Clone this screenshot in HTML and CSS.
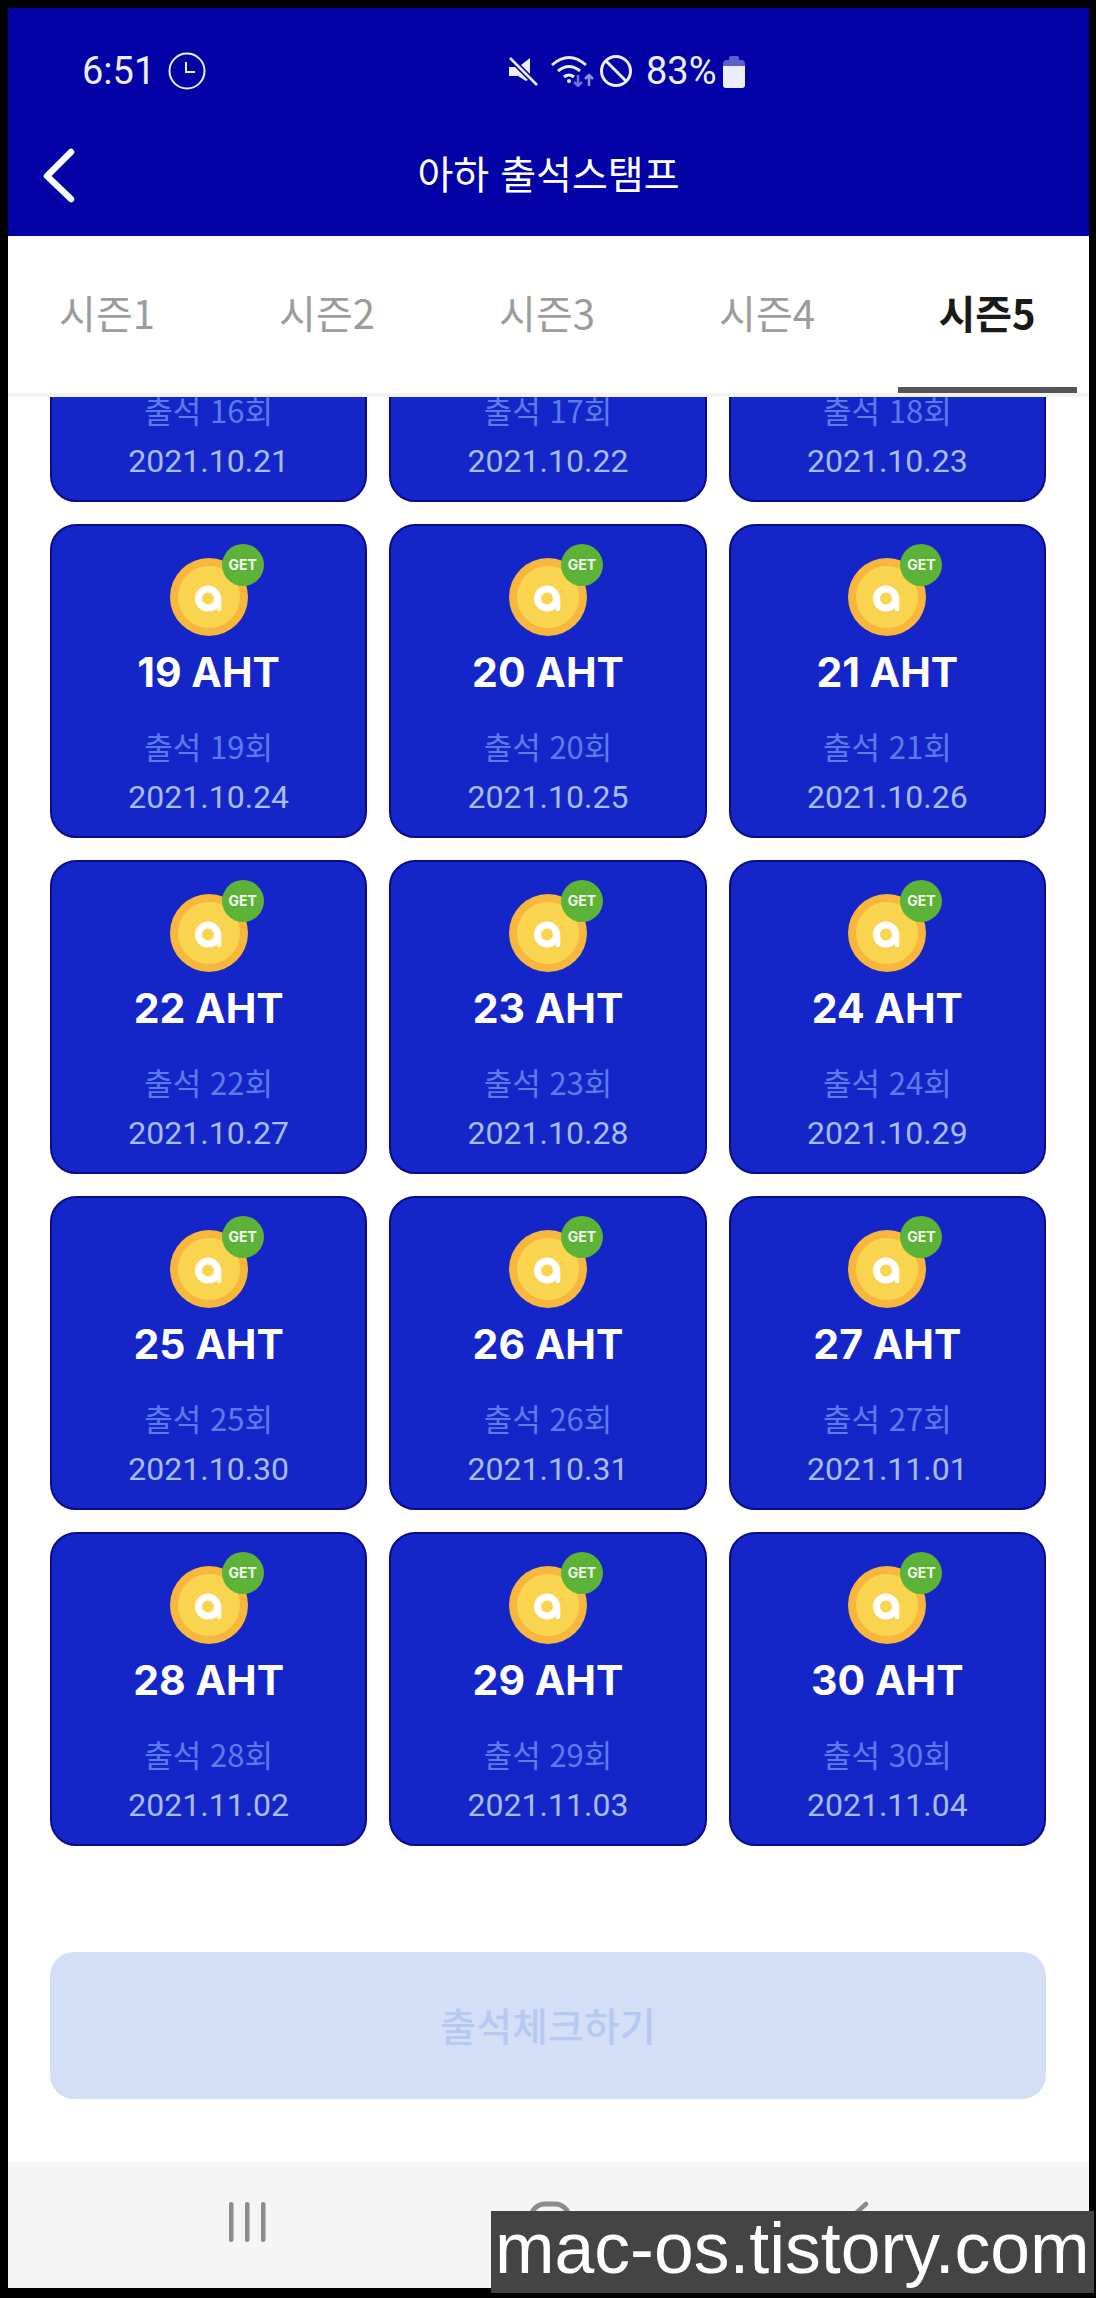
FILE: index.html
```html
<!DOCTYPE html>
<html lang="ko">
<head>
    <meta charset="UTF-8">
    <meta name="viewport" content="width=device-width, initial-scale=1.0">
    <title>아하 출석스탬프</title>
    <link rel="stylesheet" href="styles.css">
</head>
<body>
    <svg class="sprite" width="0" height="0">
        <symbol id="coin" viewBox="0 0 78 78">
            <circle cx="39" cy="39" r="39" fill="#f6b73c"/>
            <circle cx="39" cy="39" r="31" fill="#f8d44f"/>
            <circle cx="38" cy="40.500" r="9.500" fill="none" stroke="#fff" stroke-width="7"/>
            <path d="M49 40v11" fill="none" stroke="#fff" stroke-width="4.500" stroke-linecap="round"/>
        </symbol>
    </svg>

    <div class="phone">
        <header class="app__header">
            <div class="status__bar">
                <div class="status__left">
                    <span>6:51</span>
                    <svg class="status__clock" width="38" height="38" viewBox="0 0 38 38" fill="none" stroke="#eeeefb" stroke-width="2">
                        <circle cx="19" cy="19" r="17.500"/>
                        <path d="M18 10v10h9"/>
                    </svg>
                </div>
                <div class="status__right">
                    <svg width="32" height="32" viewBox="0 0 32 32" fill="#eeeefb">
                        <path d="M1 12h6l13 13-2 1-8-5H1z"/>
                        <path d="M13 10l9-7v16z"/>
                        <path d="M2 3l27 27" fill="none" stroke="#eeeefb" stroke-width="2.500"/>
                    </svg>
                    <svg class="status__wifi" width="44" height="32" viewBox="0 0 44 32" fill="none" stroke="#eeeefb" stroke-width="3">
                        <path d="M1 10q17-15 34 0"/>
                        <path d="M7 16q11-9 22 0"/>
                        <path d="M13 22q5-4 10 0"/>
                        <circle cx="18" cy="26" r="2" fill="#eeeefb" stroke="none"/>
                        <path d="M27 20v11m-4-4l4 4 4-4" stroke="#6f74d8" stroke-width="2.500"/>
                        <path d="M38 31V20m-4 4l4-4 4 4" stroke="#8d91e2" stroke-width="2.500"/>
                    </svg>
                    <svg class="status__ban" width="34" height="34" viewBox="0 0 34 34" fill="none" stroke="#eeeefb" stroke-width="3">
                        <circle cx="17" cy="17" r="14.500"/>
                        <path d="M7 7l20 20"/>
                    </svg>
                    <span class="status__battery-text">83%</span>
                    <svg width="22" height="33" viewBox="0 0 22 33">
                        <path d="M6 5V3q0-2 2-2h6q2 0 2 2v2h2q4 0 4 4v4H0V9q0-4 4-4z" fill="#5a5fcc"/>
                        <path d="M0 11h22v19q0 3-3 3H3q-3 0-3-3z" fill="#eeeefb"/>
                    </svg>
                </div>
            </div>
            <div class="app__toolbar">
                <svg class="app__back" width="40" height="58" viewBox="0 0 40 58" fill="none" stroke="#fff" stroke-width="6.500" stroke-linecap="round" stroke-linejoin="round">
                    <path d="M35 6L11 30l24 23"/>
                </svg>
                <h1 class="app__title">아하 출석스탬프</h1>
            </div>
        </header>

        <nav class="season__tabs">
            <div class="season__tab"><span class="season__label">시즌1</span></div>
            <div class="season__tab"><span class="season__label">시즌2</span></div>
            <div class="season__tab"><span class="season__label">시즌3</span></div>
            <div class="season__tab"><span class="season__label">시즌4</span></div>
            <div class="season__tab season__tab--active"><span class="season__label">시즌5</span></div>
        </nav>

        <main class="stamp__list">
            <div class="stamp__grid">
                <div class="stamp__card">
                    <div class="stamp__coin"><svg width="78" height="78"><use href="#coin"/></svg><span class="stamp__badge">GET</span></div>
                    <div class="stamp__amount">16 AHT</div>
                    <div class="stamp__count">출석 16회</div>
                    <div class="stamp__date">2021.10.21</div>
                </div>
                <div class="stamp__card">
                    <div class="stamp__coin"><svg width="78" height="78"><use href="#coin"/></svg><span class="stamp__badge">GET</span></div>
                    <div class="stamp__amount">17 AHT</div>
                    <div class="stamp__count">출석 17회</div>
                    <div class="stamp__date">2021.10.22</div>
                </div>
                <div class="stamp__card">
                    <div class="stamp__coin"><svg width="78" height="78"><use href="#coin"/></svg><span class="stamp__badge">GET</span></div>
                    <div class="stamp__amount">18 AHT</div>
                    <div class="stamp__count">출석 18회</div>
                    <div class="stamp__date">2021.10.23</div>
                </div>
                <div class="stamp__card">
                    <div class="stamp__coin"><svg width="78" height="78"><use href="#coin"/></svg><span class="stamp__badge">GET</span></div>
                    <div class="stamp__amount">19 AHT</div>
                    <div class="stamp__count">출석 19회</div>
                    <div class="stamp__date">2021.10.24</div>
                </div>
                <div class="stamp__card">
                    <div class="stamp__coin"><svg width="78" height="78"><use href="#coin"/></svg><span class="stamp__badge">GET</span></div>
                    <div class="stamp__amount">20 AHT</div>
                    <div class="stamp__count">출석 20회</div>
                    <div class="stamp__date">2021.10.25</div>
                </div>
                <div class="stamp__card">
                    <div class="stamp__coin"><svg width="78" height="78"><use href="#coin"/></svg><span class="stamp__badge">GET</span></div>
                    <div class="stamp__amount">21 AHT</div>
                    <div class="stamp__count">출석 21회</div>
                    <div class="stamp__date">2021.10.26</div>
                </div>
                <div class="stamp__card">
                    <div class="stamp__coin"><svg width="78" height="78"><use href="#coin"/></svg><span class="stamp__badge">GET</span></div>
                    <div class="stamp__amount">22 AHT</div>
                    <div class="stamp__count">출석 22회</div>
                    <div class="stamp__date">2021.10.27</div>
                </div>
                <div class="stamp__card">
                    <div class="stamp__coin"><svg width="78" height="78"><use href="#coin"/></svg><span class="stamp__badge">GET</span></div>
                    <div class="stamp__amount">23 AHT</div>
                    <div class="stamp__count">출석 23회</div>
                    <div class="stamp__date">2021.10.28</div>
                </div>
                <div class="stamp__card">
                    <div class="stamp__coin"><svg width="78" height="78"><use href="#coin"/></svg><span class="stamp__badge">GET</span></div>
                    <div class="stamp__amount">24 AHT</div>
                    <div class="stamp__count">출석 24회</div>
                    <div class="stamp__date">2021.10.29</div>
                </div>
                <div class="stamp__card">
                    <div class="stamp__coin"><svg width="78" height="78"><use href="#coin"/></svg><span class="stamp__badge">GET</span></div>
                    <div class="stamp__amount">25 AHT</div>
                    <div class="stamp__count">출석 25회</div>
                    <div class="stamp__date">2021.10.30</div>
                </div>
                <div class="stamp__card">
                    <div class="stamp__coin"><svg width="78" height="78"><use href="#coin"/></svg><span class="stamp__badge">GET</span></div>
                    <div class="stamp__amount">26 AHT</div>
                    <div class="stamp__count">출석 26회</div>
                    <div class="stamp__date">2021.10.31</div>
                </div>
                <div class="stamp__card">
                    <div class="stamp__coin"><svg width="78" height="78"><use href="#coin"/></svg><span class="stamp__badge">GET</span></div>
                    <div class="stamp__amount">27 AHT</div>
                    <div class="stamp__count">출석 27회</div>
                    <div class="stamp__date">2021.11.01</div>
                </div>
                <div class="stamp__card">
                    <div class="stamp__coin"><svg width="78" height="78"><use href="#coin"/></svg><span class="stamp__badge">GET</span></div>
                    <div class="stamp__amount">28 AHT</div>
                    <div class="stamp__count">출석 28회</div>
                    <div class="stamp__date">2021.11.02</div>
                </div>
                <div class="stamp__card">
                    <div class="stamp__coin"><svg width="78" height="78"><use href="#coin"/></svg><span class="stamp__badge">GET</span></div>
                    <div class="stamp__amount">29 AHT</div>
                    <div class="stamp__count">출석 29회</div>
                    <div class="stamp__date">2021.11.03</div>
                </div>
                <div class="stamp__card">
                    <div class="stamp__coin"><svg width="78" height="78"><use href="#coin"/></svg><span class="stamp__badge">GET</span></div>
                    <div class="stamp__amount">30 AHT</div>
                    <div class="stamp__count">출석 30회</div>
                    <div class="stamp__date">2021.11.04</div>
                </div>
            </div>
        </main>

        <div class="check__area">
            <button type="button" class="check__btn" disabled>출석체크하기</button>
        </div>

        <footer class="nav__bar">
            <svg width="40" height="42" viewBox="0 0 40 42" fill="#8c8c8c">
                <rect x="1" y="1" width="4.500" height="40" rx="2"/>
                <rect x="17" y="1" width="4.500" height="40" rx="2"/>
                <rect x="33" y="1" width="4.500" height="40" rx="2"/>
            </svg>
            <svg width="44" height="44" viewBox="0 0 44 44" fill="none" stroke="#8c8c8c" stroke-width="5">
                <rect x="3" y="3" width="38" height="38" rx="14"/>
            </svg>
            <svg width="30" height="44" viewBox="0 0 30 44" fill="none" stroke="#8c8c8c" stroke-width="4.500" stroke-linecap="round">
                <path d="M26 3L5 22l21 19"/>
            </svg>
        </footer>
    </div>

    <div class="watermark">mac-os.tistory.com</div>
</body>
</html>
```

FILE: styles.css
```css
html, body {
    height: 2298px;
}
body {
    background: #000;
    margin: 0;
    padding: 8px 7px 10px 8px;
    box-sizing: border-box;
    position: relative;
    overflow: hidden;
    font-family: 'Noto Sans CJK KR', sans-serif;
}
.sprite {
    position: absolute;
}
.phone {
    background: #fff;
    height: 2280px;
    display: flex;
    flex-direction: column;
    overflow: hidden;
}

/* header */
.app__header {
    background: #0202a6;
    color: #fff;
    height: 228px;
    flex: none;
}
.status__bar {
    height: 126px;
    display: grid;
    grid-template-columns: 426px auto;
    align-items: center;
    padding-left: 74px;
    color: #eeeefb;
    font-family: 'Roboto', sans-serif;
    font-size: 38px;
}
.status__left {
    display: flex;
    align-items: center;
    gap: 13px;
}
.status__right {
    display: flex;
    align-items: center;
    gap: 0;
}
.status__wifi {
    margin-left: 11px;
}
.status__ban {
    margin-left: 4px;
}
.status__battery-text {
    margin: 0 6px 0 13px;
}
.app__toolbar {
    height: 82px;
    display: grid;
    grid-template-columns: 1fr auto 1fr;
    align-items: center;
}
.app__back {
    margin-left: 28px;
}
.app__title {
    grid-column: 2;
    margin: 0;
    font-size: 39px;
    font-weight: 400;
    line-height: 76px;
    height: 82px;
}

/* tabs */
.season__tabs {
    height: 157px;
    flex: none;
    display: flex;
    margin-left: -11px;
    border-bottom: 4px solid #f3f3f6;
}
.season__tab {
    width: 220px;
    flex: none;
    display: flex;
    justify-content: center;
    color: #9c9c9c;
    font-size: 40px;
    font-weight: 400;
}
.season__label {
    width: 179px;
    text-align: center;
    line-height: 152px;
    height: 157px;
    box-sizing: border-box;
}
.season__tab--active {
    color: #1a1a1a;
    font-weight: 700;
}
.season__tab--active .season__label {
    border-bottom: 6px solid #555;
}

/* stamp cards */
.stamp__list {
    flex: 1;
    min-height: 0;
    overflow: hidden;
}
.stamp__grid {
    margin-top: -209px;
    padding: 0 43px 0 42px;
    display: grid;
    grid-template-columns: repeat(3, 1fr);
    gap: 22px;
}
.stamp__card {
    background: #1526c8;
    border: 2px solid #0a0a8c;
    border-radius: 26px;
    box-sizing: border-box;
    height: 314px;
    padding-top: 32px;
    display: flex;
    flex-direction: column;
    align-items: center;
}
.stamp__coin {
    width: 78px;
    height: 78px;
    position: relative;
}
.stamp__coin svg {
    display: block;
}
.stamp__badge {
    position: absolute;
    left: 52px;
    top: -14px;
    width: 42px;
    height: 42px;
    border-radius: 50%;
    background: #5cb338;
    color: #f4fbef;
    font-family: 'Inter', sans-serif;
    font-size: 14px;
    font-weight: 700;
    line-height: 42px;
    text-align: center;
}
.stamp__amount {
    margin-top: 13px;
    color: #fff;
    font-family: 'Inter', sans-serif;
    font-size: 41px;
    font-weight: 700;
    line-height: 46px;
}
.stamp__count {
    margin-top: 31px;
    color: #5d7bea;
    font-size: 31px;
    line-height: 40px;
}
.stamp__date {
    margin-top: 9px;
    color: #a8bcf5;
    font-family: 'Roboto', sans-serif;
    font-size: 32px;
    line-height: 44px;
}

/* button */
.check__area {
    flex: none;
    padding: 86px 43px 63px 42px;
}
.check__btn {
    display: block;
    width: 100%;
    height: 147px;
    border: none;
    border-radius: 24px;
    background: #d2dff5;
    color: #b6c9f0;
    font-family: inherit;
    font-size: 39px;
    font-weight: 500;
    padding: 0 0 3px;
}

/* android nav */
.nav__bar {
    flex: none;
    height: 126px;
    background: #f5f5f5;
    display: grid;
    grid-template-columns: 300px 312px 1fr;
    justify-items: start;
    padding: 39px 0 0 220px;
    box-sizing: border-box;
    align-items: start;
}

.watermark {
    position: absolute;
    left: 491px;
    right: 2px;
    top: 2211px;
    height: 82px;
    background: #444;
    color: #fff;
    font-family: 'Liberation Sans', sans-serif;
    font-size: 71.5px;
    line-height: 74px;
    white-space: nowrap;
    padding-left: 4px;
}
```
